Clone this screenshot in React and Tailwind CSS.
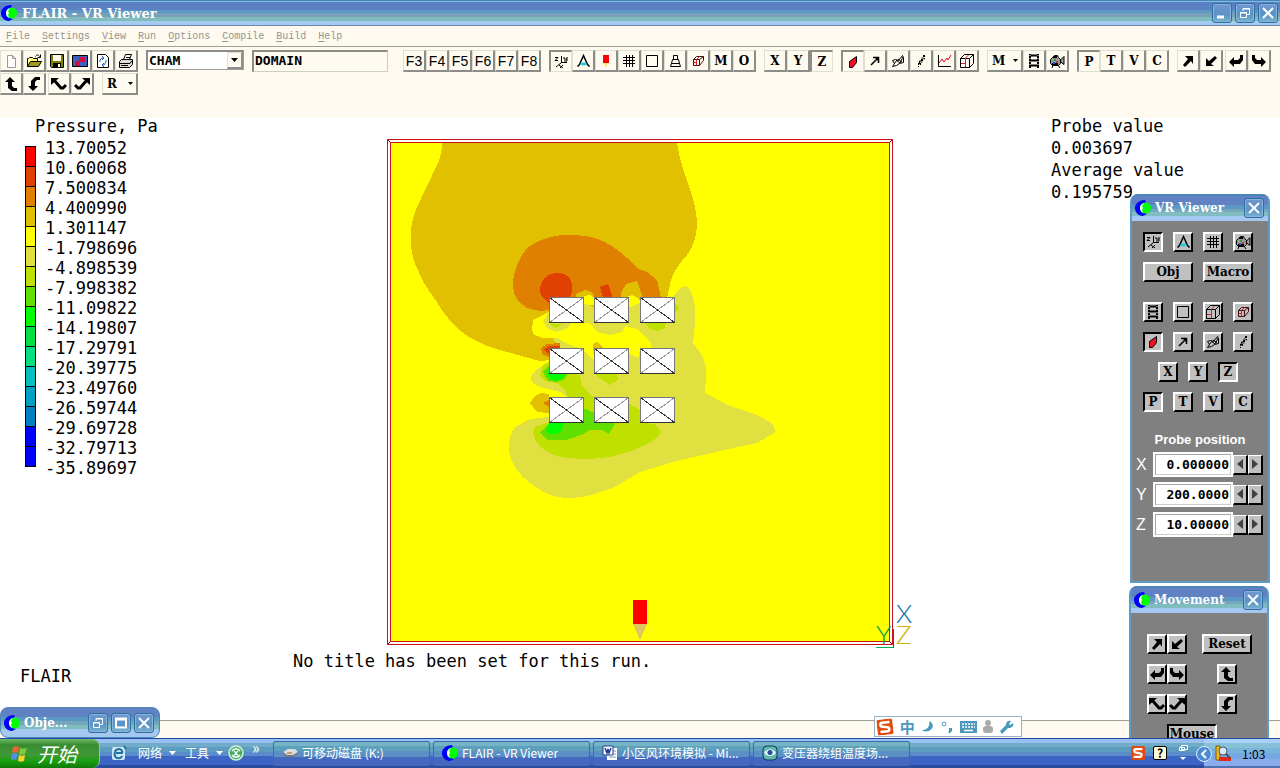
import { useState } from 'react';

const LEGEND_COLORS = [
  '#ff0000', '#e04000', '#e08000', '#e0c000', '#ffff00', '#e0e040', '#c0e000', '#60e000',
  '#00ff00', '#00e040', '#00e080', '#00c0c0', '#00a0c0', '#0080c0', '#0000ff', '#0000ff',
];

const LEGEND_VALUES = [
  '13.70052', '10.60068', '7.500834', '4.400990', '1.301147', '-1.798696', '-4.898539',
  '-7.998382', '-11.09822', '-14.19807', '-17.29791', '-20.39775', '-23.49760', '-26.59744',
  '-29.69728', '-32.79713', '-35.89697',
];

const MENUS = ['File', 'Settings', 'View', 'Run', 'Options', 'Compile', 'Build', 'Help'];

function Logo({ className = 'size-4' }) {
  return (
    <svg viewBox="0 0 16 16" className={`${className} shrink-0`} aria-hidden="true">
      <path d="M10 0C4 0 0 4 0 8s3 8 8 8l4-2C9 13 6 11 6 8s2-5 5-6z" fill="#0000ff" />
      <circle cx="10.500" cy="8" r="5.500" fill="#00ff00" />
      <path d="M9 3C6 4 5 6 5 8s1 4 3 5l-1-3 1-2-1-2z" fill="#fff" />
    </svg>
  );
}

const ICONS = {
  blank: <path d="M4.500 2.500h5l3 3v9h-8zM9.500 2.500v3h3" fill="#fff" stroke="#999" />,
  open: (
    <>
      <path d="M1.500 13.500v-8h1l1-1h3l1 1h4v3" fill="#ffff80" stroke="#000" />
      <path d="M1.500 13.500l3-5h11l-3 5z" fill="#a09a20" stroke="#000" />
      <path d="M9.500 3.500c1-2 3-2 4 0M14.500 1.500v3h-3" fill="none" stroke="#000" />
    </>
  ),
  save: (
    <>
      <path d="M1.500 1.500h13v13h-12l-1-1z" fill="#808000" stroke="#000" />
      <path d="M4 2h8v6H4z" fill="#fffaf0" />
      <path d="M4 10h8v4H4z" fill="#000" />
      <path d="M9 11h2v3H9z" fill="#fff" />
    </>
  ),
  picture: (
    <>
      <path d="M.5 2.500h15v11H.5z" fill="#3a62c0" stroke="#000" />
      <path d="M4 12l3-3M8 8l3-3M8 5h4v3H8zM4 9h3v3H4z" fill="none" stroke="#d01040" strokeWidth="2" />
    </>
  ),
  reload: (
    <>
      <path d="M2.500 1.500h8l3 3v10h-11z" fill="#fff" stroke="#000" />
      <path d="M5 9V7l2-2h2M11 7v2l-2 3H7M7 3l2 2-2 2M9 10l-2 2 2 2" fill="none" stroke="#2060c0" />
    </>
  ),
  print: (
    <>
      <path d="M5.500 6.500l2-5h6l-2 5" fill="#fff" stroke="#000" />
      <path d="M1.500 8.500l2-2h11v5l-3 3h-10z" fill="#ddd" stroke="#000" />
      <path d="M2 10.500h10l2-3M3 12.500h7M8 4.500h4" fill="none" stroke="#000" />
    </>
  ),
  axes: (
    <>
      <path d="M8.500 2v7M8.500 8.500H14M8.500 8.500L3 13M6 11l4 3M10 11l-3 3" fill="none" stroke="#000" />
      <path d="M2 3.500h3l-3 3h3M11 3v2h3M14 3v4h-3" fill="none" stroke="#000" />
    </>
  ),
  probe: (
    <>
      <path d="M2.500 13.500l2-2 4-9 4 9 2 2" fill="none" stroke="#000" strokeWidth="1.500" />
      <path d="M5 11c2-2 5-2 7 0-2 2-5 2-7 0z" fill="#20d0e0" />
    </>
  ),
  marker: (
    <>
      <path d="M5 2h6v8H5z" fill="#f00" />
      <path d="M6 10h4v1l-2 3-2-3z" fill="#ffe860" />
    </>
  ),
  grid: <path d="M5.500 2v12M8.500 2v12M11.500 2v12M2 4.500h12M2 7.500h12M2 10.500h12" fill="none" stroke="#000" />,
  square: <path d="M2.500 2.500h11v11h-11z" fill="none" stroke="#000" />,
  stack: <path d="M6.500 2.500h4v4h-4zM5.500 6.500h6l1 4h-8zM4.500 10.500h8l1 3h-10z" fill="none" stroke="#000" />,
  cube: (
    <>
      <path d="M3.500 6.500l3-3h7v4l-4 5h-6zM3.500 6.500h6v6M9.500 6.500l4-3" fill="none" stroke="#401010" />
      <path d="M6.500 12.500v-6l3-3M3.500 9.500h3" fill="none" stroke="#e02020" />
    </>
  ),
  box: (
    <>
      <path d="M1.500 5.500l4-4h9v9l-4 4h-9zM1.500 5.500h9v9M10.500 5.500l4-4" fill="none" stroke="#000" />
      <path d="M6.500 14v-9l3-3M2 10.500h4" fill="none" stroke="#e02020" />
    </>
  ),
  slab: <path d="M4.500 7.500l7-5v6l-4 5h-3z" fill="#f01020" stroke="#000" />,
  vector: <path d="M4 12l7-7M6 4.500h5.500V10M9 5l3 3" fill="none" stroke="#000" strokeWidth="1.500" />,
  ribbon: (
    <path d="M2.500 7.500l3-1 3 1 4-5 1 2v5l-4 1-3 2-4 1 2-3zM6 7l4 3M8 6l4 3M4 11l3-4M10 10l3-6" fill="none" stroke="#000" />
  ),
  stream: <path d="M10.500 2v3h-2v3h-2v3h-2M11.500 2v4h-2v3h-2v3M6 10l3-4M5.500 10v4" fill="none" stroke="#000" strokeDasharray="2 1" />,
  chart: (
    <>
      <path d="M2.500 2v11.500H15" fill="none" stroke="#000" />
      <path d="M3 10l3-4 2 3 3-4 1 2 3-5" fill="none" stroke="#e01030" />
    </>
  ),
  film: (
    <>
      <path d="M3 1h2v14H3zM11 1h2v14h-2z" fill="#000" />
      <path d="M5 2.500h6M5 7.500h6M5 12.500h6" stroke="#000" strokeWidth="2" />
      <path d="M4 2v12M12 2v12" stroke="#fff" strokeDasharray="1 2" />
    </>
  ),
  camera: (
    <>
      <path d="M3.500 4.500l2-2h3l1 2 2 2v4l-2 2h-6l-2-2v-4zM11 7.500l4-4v8l-4-3M4 12l-1 3M9 12l2 3" fill="#999" stroke="#000" />
      <path d="M4 4h4M3 11h6" stroke="#000" strokeWidth="2" />
      <path d="M5 6h2v2H5z" fill="#20a040" />
      <path d="M7 8h2v2H7z" fill="#d03030" />
      <path d="M4 9h2v2H4z" fill="#3050e0" />
    </>
  ),
  ne: <path d="M5 3h8v8l-2-3-6 6-2-2 5-6z" fill="#000" />,
  sw: <path d="M3 5v8h8l-3-2 6-6-2-2-6 5z" fill="#000" />,
  left: <path d="M1 9l5-5v3h4l2-2V2h3v5l-3 4H6v3z" fill="#000" />,
  right: <path d="M15 9l-5-5v3H6L4 5V2H1v5l3 4h6v3z" fill="#000" />,
  up: <path d="M7 1l5 5H9v4l2 2h3v3H9l-4-3V6H2z" fill="#000" />,
  down: <path d="M7 15l-5-5h3V5l4-4h5v3h-3L9 6v4h3z" fill="#000" />,
  nw: (
    <>
      <path d="M0 2h8L0 9z" fill="#000" />
      <path d="M3 4l7 8h2l3-3" fill="none" stroke="#000" strokeWidth="3" />
    </>
  ),
  tr: (
    <>
      <path d="M16 2H8l8 7z" fill="#000" />
      <path d="M13 4l-7 8H4L1 9" fill="none" stroke="#000" strokeWidth="3" />
    </>
  ),
};

function Icon({ name }) {
  return (
    <svg viewBox="0 0 16 16" className="size-4 shrink-0" aria-hidden="true">
      {ICONS[name]}
    </svg>
  );
}

function ToolButton({ icon, label, pressed, plain }) {
  return (
    <button
      type="button"
      aria-label={label || icon}
      className={`flex h-[22px] w-[23px] shrink-0 items-center justify-center text-black ${
        pressed
          ? 'border-t-2 border-l-2 border-r border-b border-t-[#8c8c88] border-l-[#8c8c88] border-r-[#dce0d0] border-b-[#dce0d0]'
          : 'border-t border-l border-r-2 border-b-2 border-t-[#dce0d0] border-l-[#dce0d0] border-r-[#8c8c88] border-b-[#8c8c88]'
      } ${plain ? "font-['Liberation_Sans',sans-serif] text-sm" : "font-['DejaVu_Serif',serif] text-xs font-bold"}`}
    >
      {icon ? <Icon name={icon} /> : label}
    </button>
  );
}

function DropButton({ label }) {
  return (
    <button
      type="button"
      className="flex h-[22px] w-9 shrink-0 items-center justify-between border-t border-l border-r-2 border-b-2 border-t-[#dce0d0] border-l-[#dce0d0] border-r-[#8c8c88] border-b-[#8c8c88] pr-[3px] pl-1 font-['DejaVu_Serif',serif] text-xs font-bold"
    >
      {label}
      <svg viewBox="0 0 5 3" className="h-[3px] w-[5px]" aria-hidden="true">
        <path d="M0 0h5L2.500 3z" />
      </svg>
    </button>
  );
}

function Group({ children }) {
  return <div className="flex shrink-0">{children}</div>;
}

function CaptionButton({ kind }) {
  return (
    <button
      type="button"
      aria-label={kind}
      className="flex size-5 shrink-0 items-center justify-center rounded-[3px] border border-[#2f6f9f] bg-[linear-gradient(#7396d0,#5a94c6_60%,#78b4cc)] shadow-[inset_0_0_0_1px_#86b4dc]"
    >
      <svg viewBox="0 0 14 14" className="size-[14px]" fill="none" stroke="#fff" aria-hidden="true">
        {kind === 'Minimize' && <path d="M2 11h7" strokeWidth="3" />}
        {kind === 'Restore' && <path d="M2.500 6.500h6v5h-6zM2 7h7M5 5V2.500h6.500v6H9M5 3h7" strokeWidth="1" />}
        {kind === 'Maximize' && <path d="M2 2.500h10v9H2zM2 3.500h10" strokeWidth="2" />}
        {kind === 'Close' && <path d="M2 2l10 10M12 2L2 12" strokeWidth="2" />}
      </svg>
    </button>
  );
}

function PanelButton({ icon, label, pressed, wide }) {
  return (
    <button
      type="button"
      aria-label={label || icon}
      className={`flex h-5 shrink-0 items-center justify-center overflow-hidden border-2 bg-[#c0c0c0] font-['DejaVu_Serif',serif] text-xs leading-none font-bold text-black ${
        wide ? 'w-[50px]' : 'w-5'
      } ${
        pressed
          ? 'border-t-black border-r-white border-b-white border-l-black'
          : 'border-t-white border-r-black border-b-black border-l-white'
      }`}
    >
      {icon ? <Icon name={icon} /> : label}
    </button>
  );
}

function PanelTitle({ children }) {
  return (
    <div className="flex h-[27px] shrink-0 items-center gap-1 bg-[linear-gradient(#4a86b8_0_2px,#6082c2_2px_11px,#5c98c4_11px_15px,#74a6bc_15px_18px,#80bcc0_18px_22px,#a4c8f0_22px)] pr-1 pl-[3px]">
      <Logo />
      <h2 className="flex-1 font-['DejaVu_Serif',serif] text-xs font-bold whitespace-nowrap text-white">{children}</h2>
      <CaptionButton kind="Close" />
    </div>
  );
}

function ProbeField({ axis, value }) {
  const [v, setV] = useState(value);
  return (
    <div className="flex items-center">
      <label htmlFor={`probe-${axis}`} className="w-[17px] font-['Liberation_Sans',sans-serif] text-base leading-none text-white">
        {axis}
      </label>
      <input
        id={`probe-${axis}`}
        value={v}
        onChange={(e) => setV(e.target.value)}
        className="h-[25px] w-20 min-w-0 border-2 border-white bg-white pr-[2px] text-right font-['DejaVu_Sans_Mono',monospace] text-[13px] font-bold text-black shadow-[inset_1px_1px_0_#a0a8a0,inset_-1px_-1px_0_#c8d0c8]"
      />
      {['decrease', 'increase'].map((dir) => (
        <button
          key={dir}
          type="button"
          aria-label={`${dir} ${axis}`}
          className="flex h-5 w-[15px] items-center justify-center border-t border-r-2 border-b-2 border-l border-t-white border-r-black border-b-black border-l-white bg-[#c0c0c0]"
        >
          <svg viewBox="0 0 6 10" className="h-[10px] w-[6px]" aria-hidden="true">
            <path d={dir === 'decrease' ? 'M6 0v10L0 5z' : 'M0 0v10l6-5z'} fill="#404040" />
          </svg>
        </button>
      ))}
    </div>
  );
}

function Contours() {
  return (
    <svg
      viewBox="387 139 525 510"
      className="ml-[94px] h-[510px] w-[525px] shrink-0 overflow-visible"
      role="img"
      aria-label="Pressure contours"
    >
      <g shapeRendering="crispEdges">
        <path d="M391 143H889V641H391z" fill="#ffff00" />
        <path
          d="M442 143H677C679 158 684 172 689 186C694 200 697 213 697 226C696 238 693 247 687 255C680 263 674 271 671 280L667 298L549 312L536 321L532 327L533 334L542 338H558L567 345L568 352L549 360L540 361L507 352L490 347C477 342 466 336 458 329C448 319 441 310 437 302C428 290 422 281 418 270C412 259 410 247 411 234C411 222 414 213 419 203C424 191 430 181 434 171C439 163 442 153 442 143z"
          fill="#e0c000"
        />
        <path
          d="M549 310L540 311L527 308L519 302C513 295 512 284 514 275C517 263 522 252 530 246C543 237 556 235 570 235C580 235 589 236 598 239C614 245 627 257 638 269L647 272L657 280L661 298H643L641 292L637 281L626 284L621 293V298H595L592 292L585 290L576 294V305z"
          fill="#e08000"
        />
        <path d="M549 303L542 297C537 289 541 279 549 275C556 271 566 273 570 279C573 284 573 291 570 298z" fill="#e04000" />
        <path d="M600 287L608 284L613 298H603z" fill="#e04000" />
        <path d="M580 303L584 296L590 295L596 299V305H583zM626 303V297L632 295L638 298L643 304z" fill="#ffff00" />
        <path d="M667 312L668 300L673 291L682 287L688 297L684 311z" fill="#ffff00" />
        <path
          d="M673 298C676 292 680 287 685 286C691 287 694 300 695 308V325L693 343C697 349 701 352 703 358C706 363 706 370 706 376L705 393L730 406L755 414L772 423L776 432L757 443L720 451L673 462L640 472C625 480 617 488 600 492C590 496 579 498 568 498C556 498 546 494 537 488C526 481 519 474 515 467C511 460 509 454 509 447C509 439 511 433 515 427L530 419L549 417V398L567 397L560 392L540 387C533 384 531 382 531 377C533 371 540 367 549 362V350H560L549 331L543 325L544 317L549 313L583 303L596 308H628L640 303z"
          fill="#e0e040"
        />
        <path
          d="M533 320L549 312L543 322L548 329L557 332L568 328L571 323H590L597 332L610 335L622 332L625 326L637 329L650 341L652 350H640L638 358L628 353L628 348H603L597 342L593 347L594 360L583 350L568 344L557 338L540 336L532 330z"
          fill="#ffff00"
        />
        <path d="M541 348L547 344L560 343V350L549 357L542 354z" fill="#e08000" />
        <path d="M544 349L550 346L560 346V352L549 355z" fill="#e04000" />
        <path d="M593 349V344L597 342L603 348z" fill="#e0c000" />
        <path d="M530 403L535 396L541 393L549 394V413L537 412z" fill="#e0c000" />
        <path d="M543 403L549 400V407z" fill="#e08000" />
        <path
          d="M570 373L580 375L582 385L590 395L597 398L628 403L640 410V423L655 424L661 432C658 437 654 440 651 442C640 449 622 454 610 457C590 460 573 459 560 457C549 454 540 448 536 441L533 433L535 427L549 422V397H568L565 390L557 383L545 381L540 375L543 365L549 362z"
          fill="#c0e000"
        />
        <path d="M594 371L598 377L610 385L618 380L617 373zM645 323L650 329L658 331L665 328L666 323zM674 303L679 307L678 311L674 312zM549 324H563L556 328z" fill="#c0e000" />
        <path d="M543 372L549 365L568 373L565 379L557 382L548 381zM583 408L595 413L615 424L609 434L602 430L590 430L583 434L567 440H547L540 433L549 423z" fill="#60e000" />
        <path d="M547 373L549 369L565 374L562 379L556 381L549 378zM549 423H564L560 433L550 434L546 431z" fill="#00ff00" />
        <path d="M633 600h14v24h-14z" fill="#ff0000" />
        <path d="M633 624h14l-7 16z" fill="#e0c860" />
      </g>
      <g shapeRendering="crispEdges">
        {[297, 348, 397].map((y) =>
          [549, 594, 640].map((x) => (
            <g key={`${x}-${y}`}>
              <path d={`M${x + 0.5} ${y + 0.5}h34v25h-34z`} fill="#fff" stroke="#777" />
              <path d={`M${x + 1} ${y + 25}l33-24`} stroke="#999" />
              <path d={`M${x + 1} ${y + 1}l33 24M${x} ${y + 25.5}h35`} stroke="#333" />
            </g>
          )),
        )}
      </g>
      <g fill="none" stroke="#c81020" shapeRendering="crispEdges">
        <path d="M387.500 139.500H892.500V644.500H387.500z" />
        <path d="M390.500 142.500H889.500V641.500H390.500z" />
        <path d="M387.500 139.500l3 3M892.500 139.500l-3 3M892.500 644.500l-3-3M387.500 644.500l3-3" />
      </g>
      <g fill="none" shapeRendering="crispEdges">
        <path d="M876 647.500h17" stroke="#00b060" />
        <path d="M893.500 629v19" stroke="#305090" />
      </g>
      <g className="font-['Lato',sans-serif] text-[26px] font-light">
        <text x="896" y="623" fill="#0070b0">X</text>
        <text x="896" y="644" fill="#d0b000">Z</text>
        <text x="876" y="644" fill="#00a040">Y</text>
      </g>
    </svg>
  );
}

function VrViewerPanel() {
  return (
    <section className="absolute top-[194px] right-[10px] flex h-[389px] w-[140px] flex-col overflow-hidden rounded-t-lg border-2 border-t-0 border-[#5c9cc8] bg-[#808080]">
      <PanelTitle>VR Viewer</PanelTitle>
      <div className="flex flex-col gap-[10px] pt-[11px] pl-[11px]">
        <div className="flex gap-[10px]">
          <PanelButton icon="axes" pressed />
          <PanelButton icon="probe" />
          <PanelButton icon="grid" />
          <PanelButton icon="camera" />
        </div>
        <div className="flex gap-[10px]">
          <PanelButton label="Obj" wide />
          <PanelButton label="Macro" wide />
        </div>
        <div className="mt-[10px] flex gap-[10px]">
          <PanelButton icon="film" />
          <PanelButton icon="square" />
          <PanelButton icon="box" />
          <PanelButton icon="cube" />
        </div>
        <div className="flex gap-[10px]">
          <PanelButton icon="slab" pressed />
          <PanelButton icon="vector" />
          <PanelButton icon="ribbon" />
          <PanelButton icon="stream" />
        </div>
        <div className="flex gap-[10px] pl-[15px]">
          <PanelButton label="X" />
          <PanelButton label="Y" />
          <PanelButton label="Z" pressed />
        </div>
        <div className="flex gap-[10px]">
          <PanelButton label="P" pressed />
          <PanelButton label="T" />
          <PanelButton label="V" />
          <PanelButton label="C" />
        </div>
      </div>
      <h3 className="mt-5 mb-1 text-center font-['Liberation_Sans',sans-serif] text-[13px] leading-4 font-bold text-white">
        Probe position
      </h3>
      <div className="flex flex-col gap-[5px] pl-1">
        <ProbeField axis="X" value="0.000000" />
        <ProbeField axis="Y" value="200.0000" />
        <ProbeField axis="Z" value="10.00000" />
      </div>
    </section>
  );
}

function MovementPanel() {
  return (
    <section className="absolute top-[586px] right-[11px] bottom-0 flex w-[140px] flex-col overflow-hidden rounded-t-lg border-x-2 border-[#5c9cc8] bg-[#808080]">
      <PanelTitle>Movement</PanelTitle>
      <div className="flex shrink-0 flex-col gap-[10px] pt-[21px] pr-[15px] pl-4">
        <div className="flex items-center justify-between">
          <div className="flex">
            <PanelButton icon="ne" />
            <PanelButton icon="sw" />
          </div>
          <PanelButton label="Reset" wide />
        </div>
        <div className="flex items-center justify-between">
          <div className="flex">
            <PanelButton icon="left" />
            <PanelButton icon="right" />
          </div>
          <div className="flex w-[50px] justify-center">
            <PanelButton icon="up" />
          </div>
        </div>
        <div className="flex items-center justify-between">
          <div className="flex">
            <PanelButton icon="nw" />
            <PanelButton icon="tr" />
          </div>
          <div className="flex w-[50px] justify-center">
            <PanelButton icon="down" />
          </div>
        </div>
        <div className="pl-5">
          <PanelButton label="Mouse" wide pressed />
        </div>
      </div>
    </section>
  );
}

function SogouBadge({ className }) {
  return (
    <svg viewBox="0 0 16 16" className={className} aria-hidden="true">
      <rect x="0" y="0" width="16" height="16" rx="2" fill="#e04a10" />
      <path d="M13 3.500H5.500C3 3.500 3 7 5.500 7.500l5 1c2.500.5 2 4-.5 4H3" fill="none" stroke="#fff" strokeWidth="2.500" />
    </svg>
  );
}

function ImeBar() {
  return (
    <div className="absolute right-[258px] bottom-[1px] flex h-[21px] w-[148px] items-center justify-between border border-[#98b4c4] bg-white pr-[7px] pl-[2px] text-[#4a98bc]">
      <SogouBadge className="size-4 -rotate-6" />
      <span className="font-['Noto_Sans_CJK_SC',sans-serif] text-[15px] leading-none font-bold">中</span>
      <svg viewBox="0 0 14 14" className="size-[13px]" aria-hidden="true">
        <path d="M9 1c4 2 5 6 2 9s-7 3-10 1c5 0 9-4 8-10z" fill="#4a98bc" />
      </svg>
      <svg viewBox="0 0 12 14" className="h-[14px] w-3" aria-hidden="true">
        <circle cx="3" cy="4" r="2" fill="none" stroke="#4a98bc" />
        <path d="M8 8h3v3l-2 2H7l1-2z" fill="#4a98bc" />
      </svg>
      <svg viewBox="0 0 17 12" className="h-3 w-[17px]" aria-hidden="true">
        <path d="M0 0h17v12H0z" fill="#4a98bc" />
        <path d="M2 3h13M2 6h13" stroke="#fff" strokeWidth="1.500" strokeDasharray="2 1" />
        <path d="M4 9.500h9" stroke="#fff" strokeWidth="1.500" />
      </svg>
      <svg viewBox="0 0 10 13" className="h-[13px] w-[10px]" aria-hidden="true">
        <circle cx="5" cy="3" r="3" fill="#aaa" />
        <rect x="0" y="6" width="10" height="7" rx="3" fill="#aaa" />
      </svg>
      <svg viewBox="0 0 14 14" className="size-[14px]" aria-hidden="true">
        <path d="M13 3l-3 2-1-1 2-3C8 0 6 2 6 5l-6 6 2 3 6-6c4 0 6-2 5-5z" fill="#4a98bc" />
      </svg>
    </div>
  );
}

function DownArrow() {
  return (
    <svg viewBox="0 0 7 4" className="h-1 w-[7px]" aria-hidden="true">
      <path d="M0 0h7L3.500 4z" fill="#fff" />
    </svg>
  );
}

function Task({ icon, children }) {
  return (
    <button
      type="button"
      className="flex h-[25px] w-[157px] min-w-0 items-center gap-1 rounded-[2px] border border-[#3c6cac] bg-[linear-gradient(#74b4c4_0_4px,#5ca0bc_4px_9px,#5a90c4_9px_15px,#4468c0_15px)] pl-2 text-xs whitespace-nowrap"
    >
      {icon}
      <span className="truncate">{children}</span>
    </button>
  );
}

function Taskbar() {
  return (
    <footer className="flex h-[30px] shrink-0 items-center bg-[linear-gradient(#2848a8_0_1px,#98c0f0_1px_5px,#70acc8_5px_9px,#5c9cc0_9px_14px,#5a8ccc_14px_18px,#3c64c4_18px_27px,#2c4ca0_27px)] font-['Noto_Sans_CJK_SC',sans-serif] text-white">
      <button
        type="button"
        className="flex h-[29px] w-[100px] shrink-0 items-center gap-2 self-end rounded-r-lg border-r border-[#90c890] bg-[linear-gradient(#70b868,#388c30_20%,#409838_55%,#18a010_75%,#107808)] pl-[11px] text-xl leading-none italic"
      >
        <svg viewBox="0 0 18 16" className="h-4 w-[18px]" aria-hidden="true">
          <path d="M2 1c2-1 4-1 6 0L7 7c-2-1-4-1-6 0z" fill="#f06030" />
          <path d="M9 2c2 1 4 1 7 0l-2 6c-2 1-4 1-6 0z" fill="#80c840" />
          <path d="M1 8c2-1 4-1 6 0l-2 6c-2-1-3-1-5 0z" fill="#5090f0" />
          <path d="M8 9c2 1 4 1 6 0l-1 6c-2 1-4 1-6 0z" fill="#f8d030" />
        </svg>
        开始
      </button>
      <nav className="flex w-[173px] shrink-0 items-center pl-[11px] text-xs">
        <svg viewBox="0 0 16 16" className="mr-[11px] size-4" aria-hidden="true">
          <rect x="1" y="2" width="13" height="13" rx="2" fill="#cce4f4" />
          <path d="M11 11c-1 3-6 3-7 0s0-7 4-7c2 0 4 2 3 4H5M13 1l2 3" fill="none" stroke="#2070a0" strokeWidth="2" />
        </svg>
        <a href="#network" className="mr-[7px]">网络</a>
        <DownArrow />
        <a href="#tools" className="mr-[7px] ml-[9px]">工具</a>
        <DownArrow />
        <svg viewBox="0 0 16 16" className="ml-[5px] size-4" aria-hidden="true">
          <circle cx="8" cy="8" r="7" fill="#40b060" stroke="#d0f0d8" strokeWidth="1.500" />
          <path d="M4 6c2-3 6-3 8 0M4 10c2 3 6 3 8 0M6 6l2 2 2-2M6 10l2-1 2 1" fill="none" stroke="#fff" strokeWidth="1.500" />
        </svg>
        <span className="mb-3 ml-2 text-base leading-none">»</span>
      </nav>
      <div className="flex min-w-0 gap-[3px]">
        <Task
          icon={
            <svg viewBox="0 0 16 16" className="size-4 shrink-0" aria-hidden="true">
              <path d="M1 7l5-3h7l3 3-5 4H5z" fill="#ddd" />
              <path d="M1 7v2l4 3h6l5-4V7l-5 3H5z" fill="#777" />
              <path d="M5 8h5" stroke="#a06030" />
            </svg>
          }
        >
          可移动磁盘 (K:)
        </Task>
        <Task icon={<Logo />}>FLAIR - VR Viewer</Task>
        <Task
          icon={
            <svg viewBox="0 0 16 16" className="size-4 shrink-0" aria-hidden="true">
              <path d="M5 3h10v12H5z" fill="#fff" />
              <path d="M7 6h7M7 9h7M7 12h7" stroke="#8098c0" />
              <path d="M1 1h10v9H1z" fill="#fff" stroke="#203c90" />
              <path d="M3 3l2 5 1-4 1 4 2-5" fill="none" stroke="#203c90" strokeWidth="1.500" />
            </svg>
          }
        >
          小区风环境模拟 - Mi...
        </Task>
        <Task
          icon={
            <svg viewBox="0 0 16 16" className="size-4 shrink-0" aria-hidden="true">
              <rect x="1" y="1" width="14" height="14" rx="4" fill="#60b8a8" stroke="#103860" />
              <path d="M2 8c3-5 9-5 12 0-3 4-9 4-12 0z" fill="#e0f0ff" />
              <circle cx="8" cy="7.500" r="2.500" fill="#205090" />
            </svg>
          }
        >
          变压器绕组温度场...
        </Task>
      </div>
      <div className="ml-auto flex shrink-0 items-center">
        <SogouBadge className="mr-2 size-[14px]" />
        <span className="mr-3 flex size-[14px] items-center justify-center rounded-[2px] border border-black bg-[#fffcd8] text-xs leading-none font-bold text-black">?</span>
        <svg viewBox="0 0 9 16" className="mr-4 h-4 w-[9px]" aria-hidden="true">
          <path d="M2.500.5h6v4h-6zM.5 2.500h5v3h-5z" fill="#5a98c8" stroke="#fff" />
          <path d="M1 12h6l-3 3z" fill="#fff" />
        </svg>
      </div>
      <div className="flex h-[29px] w-[76px] shrink-0 items-center self-end bg-[linear-gradient(#a8d0f8_0_4px,#88c0d8_4px_9px,#78b4dc_9px_14px,#78a8e4_14px_20px,#88acec_20px_27px,#5070b0_27px)] text-black">
        <svg viewBox="0 0 16 16" className="mr-[2px] -ml-2 size-4" aria-hidden="true">
          <circle cx="8" cy="8" r="7.500" fill="#4c8cd4" stroke="#e0f0ff" />
          <path d="M10 4L6 8l4 4" fill="none" stroke="#fff" strokeWidth="2" />
        </svg>
        <svg viewBox="0 0 18 18" className="mr-[10px] size-[18px]" aria-hidden="true">
          <path d="M2 1h4v14H2z" fill="#e8b820" stroke="#806010" />
          <path d="M5 12h12v4H5z" fill="#e02818" />
          <circle cx="9" cy="6" r="4" fill="#d8ecff" stroke="#456" />
          <path d="M12 9l4 4" stroke="#456" strokeWidth="2" />
        </svg>
        <time className="text-xs">1:03</time>
      </div>
    </footer>
  );
}

export default function App() {
  const [domain, setDomain] = useState('DOMAIN');

  return (
    <div className="flex min-h-screen flex-col bg-white text-black">
      <div className="relative flex flex-1 flex-col overflow-hidden">
        <header className="flex h-[26px] shrink-0 items-center gap-[5px] bg-[linear-gradient(#4088b8_0_1px,#88b8e0_1px_2px,#5c80c4_2px_10px,#5c98c4_10px_13px,#78a0b8_13px_17px,#80bcbc_17px_21px,#a4ccf0_21px_25px,#7084a8_25px)] pr-[2px] pl-[1px]">
          <Logo />
          <h1 className="flex-1 font-['DejaVu_Serif',serif] text-[13px] leading-none font-bold text-white">FLAIR - VR Viewer</h1>
          <div className="flex gap-[3px]">
            <CaptionButton kind="Minimize" />
            <CaptionButton kind="Restore" />
            <CaptionButton kind="Close" />
          </div>
        </header>

        <nav className="flex h-[21px] shrink-0 items-center gap-3 border-b border-[#a0a098] bg-[#fffaf0] pl-[6px] font-['Liberation_Mono',monospace] text-[10px] text-[#949490]">
          {MENUS.map((m) => (
            <button key={m} type="button">
              <span className="underline underline-offset-2">{m[0]}</span>
              {m.slice(1)}
            </button>
          ))}
        </nav>

        <div className="flex h-[71px] shrink-0 flex-col gap-px bg-[#fffaf0] pt-[3px]">
          <div className="flex gap-2">
            <Group>
              {['blank', 'open', 'save', 'picture', 'reload', 'print'].map((i) => (
                <ToolButton key={i} icon={i} />
              ))}
            </Group>
            <div className="relative h-5 w-[98px] shrink-0">
              <select
                aria-label="Workspace"
                className="block h-5 w-full appearance-none border-2 border-r border-b border-t-[#8c8c88] border-r-[#a0a098] border-b-[#a0a098] border-l-[#8c8c88] bg-white pl-px font-['DejaVu_Sans_Mono',monospace] text-[13px] leading-4 font-bold"
              >
                <option>CHAM</option>
              </select>
              <span className="pointer-events-none absolute top-[2px] right-[1px] flex h-[17px] w-4 items-center justify-center border border-r-2 border-b-2 border-[#dce0d0] border-r-[#8c8c88] border-b-[#8c8c88] bg-[#fffaf0]">
                <svg viewBox="0 0 7 4" className="h-1 w-[7px]" aria-hidden="true">
                  <path d="M0 0h7L3.500 4z" />
                </svg>
              </span>
            </div>
            <input
              aria-label="Object name"
              value={domain}
              onChange={(e) => setDomain(e.target.value)}
              className="mr-[7px] h-[22px] w-[136px] border-t-2 border-r border-b border-l-2 border-t-[#8c8c88] border-r-[#ccd0c0] border-b-[#ccd0c0] border-l-[#8c8c88] bg-[#fffaf0] pb-[2px] pl-px font-['DejaVu_Sans_Mono',monospace] text-[13px] leading-none font-bold"
            />
            <Group>
              {['F3', 'F4', 'F5', 'F6', 'F7', 'F8'].map((f) => (
                <ToolButton key={f} label={f} plain />
              ))}
            </Group>
            <Group>
              <ToolButton icon="axes" pressed />
              {['probe', 'marker', 'grid', 'square', 'stack', 'cube'].map((i) => (
                <ToolButton key={i} icon={i} />
              ))}
              <ToolButton label="M" />
              <ToolButton label="O" />
            </Group>
            <Group>
              <ToolButton label="X" />
              <ToolButton label="Y" />
              <ToolButton label="Z" pressed />
            </Group>
            <Group>
              <ToolButton icon="slab" pressed />
              {['vector', 'ribbon', 'stream', 'chart', 'box'].map((i) => (
                <ToolButton key={i} icon={i} />
              ))}
            </Group>
            <Group>
              <DropButton label="M" />
              <ToolButton icon="film" />
              <ToolButton icon="camera" />
            </Group>
            <Group>
              <ToolButton label="P" pressed />
              <ToolButton label="T" />
              <ToolButton label="V" />
              <ToolButton label="C" />
            </Group>
            <div className="flex shrink-0 gap-[2px]">
              <Group>
                <ToolButton icon="ne" />
                <ToolButton icon="sw" />
              </Group>
              <Group>
                <ToolButton icon="left" />
                <ToolButton icon="right" />
              </Group>
            </div>
          </div>
          <div className="flex gap-2">
            <div className="flex shrink-0 gap-[2px]">
              <Group>
                <ToolButton icon="up" />
                <ToolButton icon="down" />
              </Group>
              <Group>
                <ToolButton icon="nw" />
                <ToolButton icon="tr" />
              </Group>
            </div>
            <DropButton label="R" />
          </div>
        </div>

        <main className="grid flex-1 grid-cols-[293px_1fr_229px] font-['DejaVu_Sans_Mono',monospace] text-[17px] leading-4">
          <div className="flex flex-col">
            <h2 className="mb-1 pl-[35px]">Pressure, Pa</h2>
            <div className="flex gap-[9px] pl-[25px]">
              <ul className="mt-2 w-[11px] self-start border-x border-t border-black">
                {LEGEND_COLORS.map((c, i) => (
                  <li key={i} className="h-5 border-b border-black" style={{ backgroundColor: c }} />
                ))}
              </ul>
              <ul className="leading-5">
                {LEGEND_VALUES.map((v) => (
                  <li key={v}>{v}</li>
                ))}
              </ul>
            </div>
            <p className="mt-auto mb-9 pl-5">FLAIR</p>
          </div>
          <div className="flex min-w-0 flex-col pt-[21px]">
            <Contours />
            <p className="mt-1 whitespace-nowrap">No title has been set for this run.</p>
          </div>
          <dl className="flex flex-col gap-[6px]">
            <dt>Probe value</dt>
            <dd>0.003697</dd>
            <dt>Average value</dt>
            <dd>0.195759</dd>
          </dl>
        </main>

        <div className="h-[18px] shrink-0 border-t border-[#a0a098] bg-[#fffaf0]" />

        <VrViewerPanel />
        <MovementPanel />
        <ImeBar />
        <section className="absolute bottom-0 left-0 flex h-[31px] w-40 items-center gap-[3px] rounded-lg border border-[#4a86b8] bg-[linear-gradient(#6082c2_0_9px,#5c98c4_9px_13px,#74a6bc_13px_17px,#80bcc0_17px_21px,#a4c8f0_21px)] pr-[5px] pl-[3px]">
          <Logo />
          <h2 className="flex-1 pl-px font-['DejaVu_Serif',serif] text-xs font-bold text-white">Obje...</h2>
          <CaptionButton kind="Restore" />
          <CaptionButton kind="Maximize" />
          <CaptionButton kind="Close" />
        </section>
      </div>
      <Taskbar />
    </div>
  );
}
